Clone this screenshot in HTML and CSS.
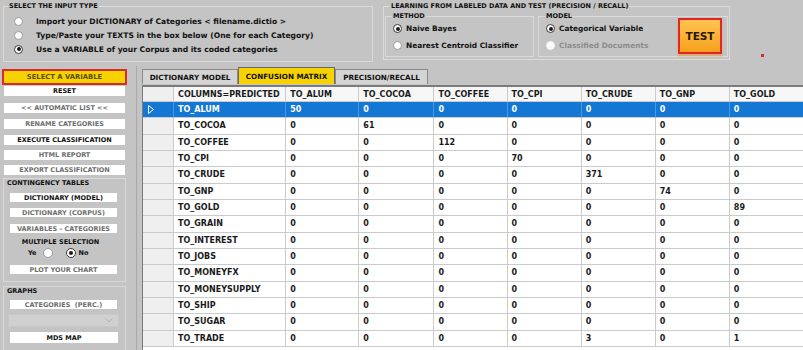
FILE: index.html
```html
<!DOCTYPE html>
<html lang="en">
<head>
    <meta charset="UTF-8">
    <title>Classification - Confusion Matrix</title>
    <link rel="stylesheet" href="styles.css">
</head>
<body>
<div class="app">
    <!-- Top options -->
    <header class="top">
        <fieldset class="group input-type">
            <legend>SELECT THE INPUT TYPE</legend>
            <label class="radio-row"><span class="radio"></span>Import your DICTIONARY of Categories &lt; filename.dictio &gt;</label>
            <label class="radio-row"><span class="radio"></span>Type/Paste your TEXTS in the box below (One for each Category)</label>
            <label class="radio-row"><span class="radio on"></span>Use a VARIABLE of your Corpus and its coded categories</label>
        </fieldset>

        <fieldset class="group learning">
            <legend>LEARNING FROM LABELED DATA AND TEST (PRECISION / RECALL)</legend>
            <div class="learning-body">
                <fieldset class="group sub method">
                    <legend>METHOD</legend>
                    <label class="opt-row"><span class="radio on"></span>Naive Bayes</label>
                    <label class="opt-row"><span class="radio"></span>Nearest Centroid Classifier</label>
                </fieldset>
                <fieldset class="group sub model">
                    <legend>MODEL</legend>
                    <div class="model-body">
                        <div>
                            <label class="opt-row"><span class="radio on"></span>Categorical Variable</label>
                            <label class="opt-row disabled"><span class="radio off"></span>Classified Documents</label>
                        </div>
                        <button class="test-btn">TEST</button>
                    </div>
                </fieldset>
            </div>
        </fieldset>

        <span class="red-dot"></span>
    </header>

    <div class="main">
        <!-- Left commands -->
        <aside class="side">
            <div class="btn select-var">SELECT A VARIABLE</div>
            <div class="btn dark mt1">RESET</div>
            <div class="btn mt7">&lt;&lt; AUTOMATIC LIST &lt;&lt;</div>
            <div class="btn">RENAME CATEGORIES</div>
            <div class="btn dark">EXECUTE CLASSIFICATION</div>
            <div class="btn mt5">HTML REPORT</div>
            <div class="btn mt5">EXPORT CLASSIFICATION</div>

            <div class="panel contingency">
                <div class="panel-title">CONTINGENCY TABLES</div>
                <div class="btn dark">DICTIONARY (MODEL)</div>
                <div class="btn">DICTIONARY (CORPUS)</div>
                <div class="btn mt7">VARIABLES - CATEGORIES</div>
                <div class="multi-title">MULTIPLE SELECTION</div>
                <div class="yes-no">
                    <span>Ye</span><span class="radio"></span>
                    <span class="radio on"></span><span>No</span>
                </div>
                <div class="btn mt7">PLOT YOUR CHART</div>
            </div>

            <div class="panel graphs">
                <div class="panel-title">GRAPHS</div>
                <div class="btn mt5">CATEGORIES&nbsp; (PERC.)</div>
                <div class="dropdown">
                    <svg width="8" height="5" viewBox="0 0 8 5"><polyline points="0.5,0.5 4,4 7.5,0.5" fill="none" stroke="#b0b0b0" stroke-width="1"/></svg>
                </div>
                <div class="btn dark mds">MDS MAP</div>
            </div>
        </aside>

        <!-- Results -->
        <section class="work">
            <nav class="tabs">
                <div class="tab t1">DICTIONARY MODEL</div>
                <div class="tab t2 active">CONFUSION MATRIX</div>
                <div class="tab t3">PRECISION/RECALL</div>
            </nav>
            <div class="grid">
                <table class="matrix">
                    <colgroup>
                        <col class="c-rh"><col class="c-name"><col class="c-a"><col class="c-b"><col class="c-a"><col class="c-n"><col class="c-n"><col class="c-n"><col class="c-n">
                    </colgroup>
                    <thead>
                        <tr><th class="rh"></th><th>COLUMNS=PREDICTED</th><th>TO_ALUM</th><th>TO_COCOA</th><th>TO_COFFEE</th><th>TO_CPI</th><th>TO_CRUDE</th><th>TO_GNP</th><th>TO_GOLD</th></tr>
                    </thead>
                    <tbody>
                        <tr class="selected"><td class="rh"><svg width="6" height="9" viewBox="0 0 6 9"><polygon points="0.5,0.5 5.5,4.5 0.5,8.5" fill="none" stroke="#fff" stroke-width="1"/></svg></td><td>TO_ALUM</td><td>50</td><td>0</td><td>0</td><td>0</td><td>0</td><td>0</td><td>0</td></tr>
                        <tr><td class="rh"></td><td>TO_COCOA</td><td>0</td><td>61</td><td>0</td><td>0</td><td>0</td><td>0</td><td>0</td></tr>
                        <tr><td class="rh"></td><td>TO_COFFEE</td><td>0</td><td>0</td><td>112</td><td>0</td><td>0</td><td>0</td><td>0</td></tr>
                        <tr><td class="rh"></td><td>TO_CPI</td><td>0</td><td>0</td><td>0</td><td>70</td><td>0</td><td>0</td><td>0</td></tr>
                        <tr><td class="rh"></td><td>TO_CRUDE</td><td>0</td><td>0</td><td>0</td><td>0</td><td>371</td><td>0</td><td>0</td></tr>
                        <tr><td class="rh"></td><td>TO_GNP</td><td>0</td><td>0</td><td>0</td><td>0</td><td>0</td><td>74</td><td>0</td></tr>
                        <tr><td class="rh"></td><td>TO_GOLD</td><td>0</td><td>0</td><td>0</td><td>0</td><td>0</td><td>0</td><td>89</td></tr>
                        <tr><td class="rh"></td><td>TO_GRAIN</td><td>0</td><td>0</td><td>0</td><td>0</td><td>0</td><td>0</td><td>0</td></tr>
                        <tr><td class="rh"></td><td>TO_INTEREST</td><td>0</td><td>0</td><td>0</td><td>0</td><td>0</td><td>0</td><td>0</td></tr>
                        <tr><td class="rh"></td><td>TO_JOBS</td><td>0</td><td>0</td><td>0</td><td>0</td><td>0</td><td>0</td><td>0</td></tr>
                        <tr><td class="rh"></td><td>TO_MONEYFX</td><td>0</td><td>0</td><td>0</td><td>0</td><td>0</td><td>0</td><td>0</td></tr>
                        <tr><td class="rh"></td><td>TO_MONEYSUPPLY</td><td>0</td><td>0</td><td>0</td><td>0</td><td>0</td><td>0</td><td>0</td></tr>
                        <tr><td class="rh"></td><td>TO_SHIP</td><td>0</td><td>0</td><td>0</td><td>0</td><td>0</td><td>0</td><td>0</td></tr>
                        <tr><td class="rh"></td><td>TO_SUGAR</td><td>0</td><td>0</td><td>0</td><td>0</td><td>0</td><td>0</td><td>0</td></tr>
                        <tr><td class="rh"></td><td>TO_TRADE</td><td>0</td><td>0</td><td>0</td><td>0</td><td>3</td><td>0</td><td>1</td></tr>
                    </tbody>
                </table>
            </div>
        </section>
    </div>
</div>
</body>
</html>
```

FILE: styles.css
```css
* {
    box-sizing: border-box;
}

body {
    margin: 0;
    background: #c4c4c4;
    font-family: "DejaVu Sans", Verdana, sans-serif;
    color: #111;
}

.app {
    width: 803px;
    height: 350px;
    overflow: hidden;
}

/* ---- top bar ---- */

.top {
    display: flex;
    align-items: flex-start;
    height: 66px;
    padding-top: 2px;
}

fieldset {
    margin: 0;
    min-width: 0;
}

.group {
    border: 1px solid #dadada;
}

.group legend {
    font-size: 6.5px;
    font-weight: bold;
    line-height: 8px;
    padding: 0 1px;
}

.input-type {
    margin-left: 3px;
    width: 370px;
    padding: 4px 0 5px 10px;
}

.input-type legend {
    margin-left: -6px;
}

.radio-row {
    display: flex;
    align-items: center;
    height: 14px;
    font-size: 7.6px;
    font-weight: bold;
    white-space: nowrap;
}

.radio {
    display: inline-flex;
    align-items: center;
    justify-content: center;
    flex: none;
    width: 9px;
    height: 9px;
    border-radius: 50%;
    background: #fff;
    border: 1px solid #9a9a9a;
}

.radio.on {
    border-color: #3a3a3a;
}

.radio.on::after {
    content: "";
    width: 4px;
    height: 4px;
    border-radius: 50%;
    background: #1a1a1a;
}

.radio.off {
    border-color: #f2f2f2;
    background: #fafafa;
}

.input-type .radio {
    margin-right: 13px;
}

.learning {
    margin-left: 10px;
    width: 347px;
    padding: 2px 1px 2px 1px;
}

.learning > legend {
    margin-left: 5px;
}

.learning-body {
    display: flex;
    gap: 4px;
}

.sub {
    padding: 0 0 2px 7px;
}

.sub legend {
    margin-left: -1px;
}

.method {
    width: 149px;
}

.model {
    width: 190px;
}

.model-body {
    display: flex;
}

.opt-row {
    display: flex;
    align-items: center;
    gap: 4px;
    height: 17px;
    font-size: 7.4px;
    font-weight: bold;
    white-space: nowrap;
}

.opt-row.disabled {
    color: #8c8c8c;
}

.test-btn {
    margin: -2px 5px 0 auto;
    width: 44px;
    height: 36px;
    border: 2px solid #e0262a;
    background: linear-gradient(#ffc350, #f7a11c);
    box-shadow: 0 2px 2px rgba(240, 150, 30, 0.6);
    font-family: "DejaVu Sans", Verdana, sans-serif;
    font-size: 10.5px;
    font-weight: bold;
    color: #2a1a00;
    padding: 0;
}

.red-dot {
    width: 3px;
    height: 3px;
    margin: 52px 0 0 31px;
    background: #e0262a;
}

/* ---- main ---- */

.main {
    display: flex;
    height: 284px;
}

.side {
    width: 136px;
    flex: none;
    padding-left: 2px;
}

.btn {
    display: flex;
    align-items: center;
    justify-content: center;
    width: 121px;
    height: 10px;
    margin: 6px 2px 0;
    background: #fff;
    font-size: 6.5px;
    font-weight: bold;
    color: #6e6e6e;
    white-space: nowrap;
}

.btn.dark {
    color: #111;
}

.mt1 { margin-top: 1px; }
.mt5 { margin-top: 5px; }
.mt7 { margin-top: 7px; }

.select-var {
    width: 125px;
    height: 16px;
    margin: 3px 0 0;
    border: 2px solid #d92b2b;
    background: #f6d200;
    color: #5c4d00;
    font-size: 6.8px;
}

.panel {
    width: 123px;
    margin: 3px 0 0 1px;
    border: 1px solid #d8d8d8;
}

.contingency {
    padding-bottom: 7px;
}

.graphs {
    margin-top: 4px;
    height: 80px;
}

.panel-title {
    padding-left: 3px;
    font-size: 6.5px;
    font-weight: bold;
    line-height: 8px;
}

.panel .btn {
    width: 107px;
    height: 9px;
    margin: 6px 6px 0;
}

.panel .btn.mt7 { margin-top: 7px; }
.panel .btn.mt5 { margin-top: 5px; }

.multi-title {
    margin: 5px 0 0 15px;
    width: 83px;
    text-align: center;
    font-size: 6.5px;
    font-weight: bold;
    line-height: 8px;
}

.yes-no {
    display: flex;
    align-items: center;
    height: 10px;
    margin: 2px 0 0 24px;
    font-size: 6.5px;
    font-weight: bold;
}

.yes-no .radio {
    width: 10px;
    height: 10px;
    margin-left: 6px;
}

.yes-no .radio.on {
    margin: 0 3px 0 13px;
}

.dropdown {
    display: flex;
    align-items: center;
    justify-content: flex-end;
    width: 111px;
    height: 13px;
    margin: 5px 4px 0;
    padding-right: 5px;
    background: #d0d0d0;
    border: 1px solid #c8c8c8;
}

.panel .btn.mds {
    height: 11px;
    margin-top: 5px;
    width: 108px;
}

/* ---- tabs + grid ---- */

.work {
    flex: 1;
    min-width: 0;
    border-left: 1px solid #a9a9a9;
    padding-left: 5px;
}

.tabs {
    display: flex;
    align-items: flex-end;
    height: 17px;
    margin-top: 1px;
}

.tab {
    display: flex;
    align-items: center;
    justify-content: center;
    height: 15px;
    border: 1px solid #8a8a8a;
    border-bottom: none;
    background: #d4d4d4;
    font-size: 7.2px;
    font-weight: bold;
    white-space: nowrap;
}

.t1 { width: 96px; }
.t2 { width: 97px; }
.t3 { width: 93px; }

.tab.active {
    height: 17px;
    background: #f6d300;
    border-color: #6a6a6a;
}

.grid {
    height: 266px;
    margin-top: 1px;
    border-top: 2px solid #7b7b7b;
    border-left: 1px solid #7b7b7b;
    background: #fff;
}

.matrix {
    table-layout: fixed;
    border-collapse: separate;
    border-spacing: 0;
    width: 661px;
    font-size: 8px;
    font-weight: bold;
    color: #1a1a1a;
}

.c-rh { width: 31px; }
.c-name { width: 112px; }
.c-a { width: 73px; }
.c-b { width: 75px; }
.c-n { width: 74px; }

.matrix th,
.matrix td {
    padding: 0 0 0 4px;
    text-align: left;
    white-space: nowrap;
    overflow: hidden;
    border-right: 1px solid #cbcbcb;
    border-bottom: 1px solid #cbcbcb;
}

.matrix thead tr {
    height: 15px;
}

.matrix th {
    background: #f7f7f7;
    font-weight: bold;
}

.matrix tbody tr {
    height: 16.33px;
}

.matrix .rh {
    background: #efefef;
    padding-left: 5px;
}

.matrix tr.selected td {
    background: #1477d4;
    color: #fff;
    border-right-color: #4f97dd;
}

.matrix tr.selected td svg {
    display: block;
}
```
